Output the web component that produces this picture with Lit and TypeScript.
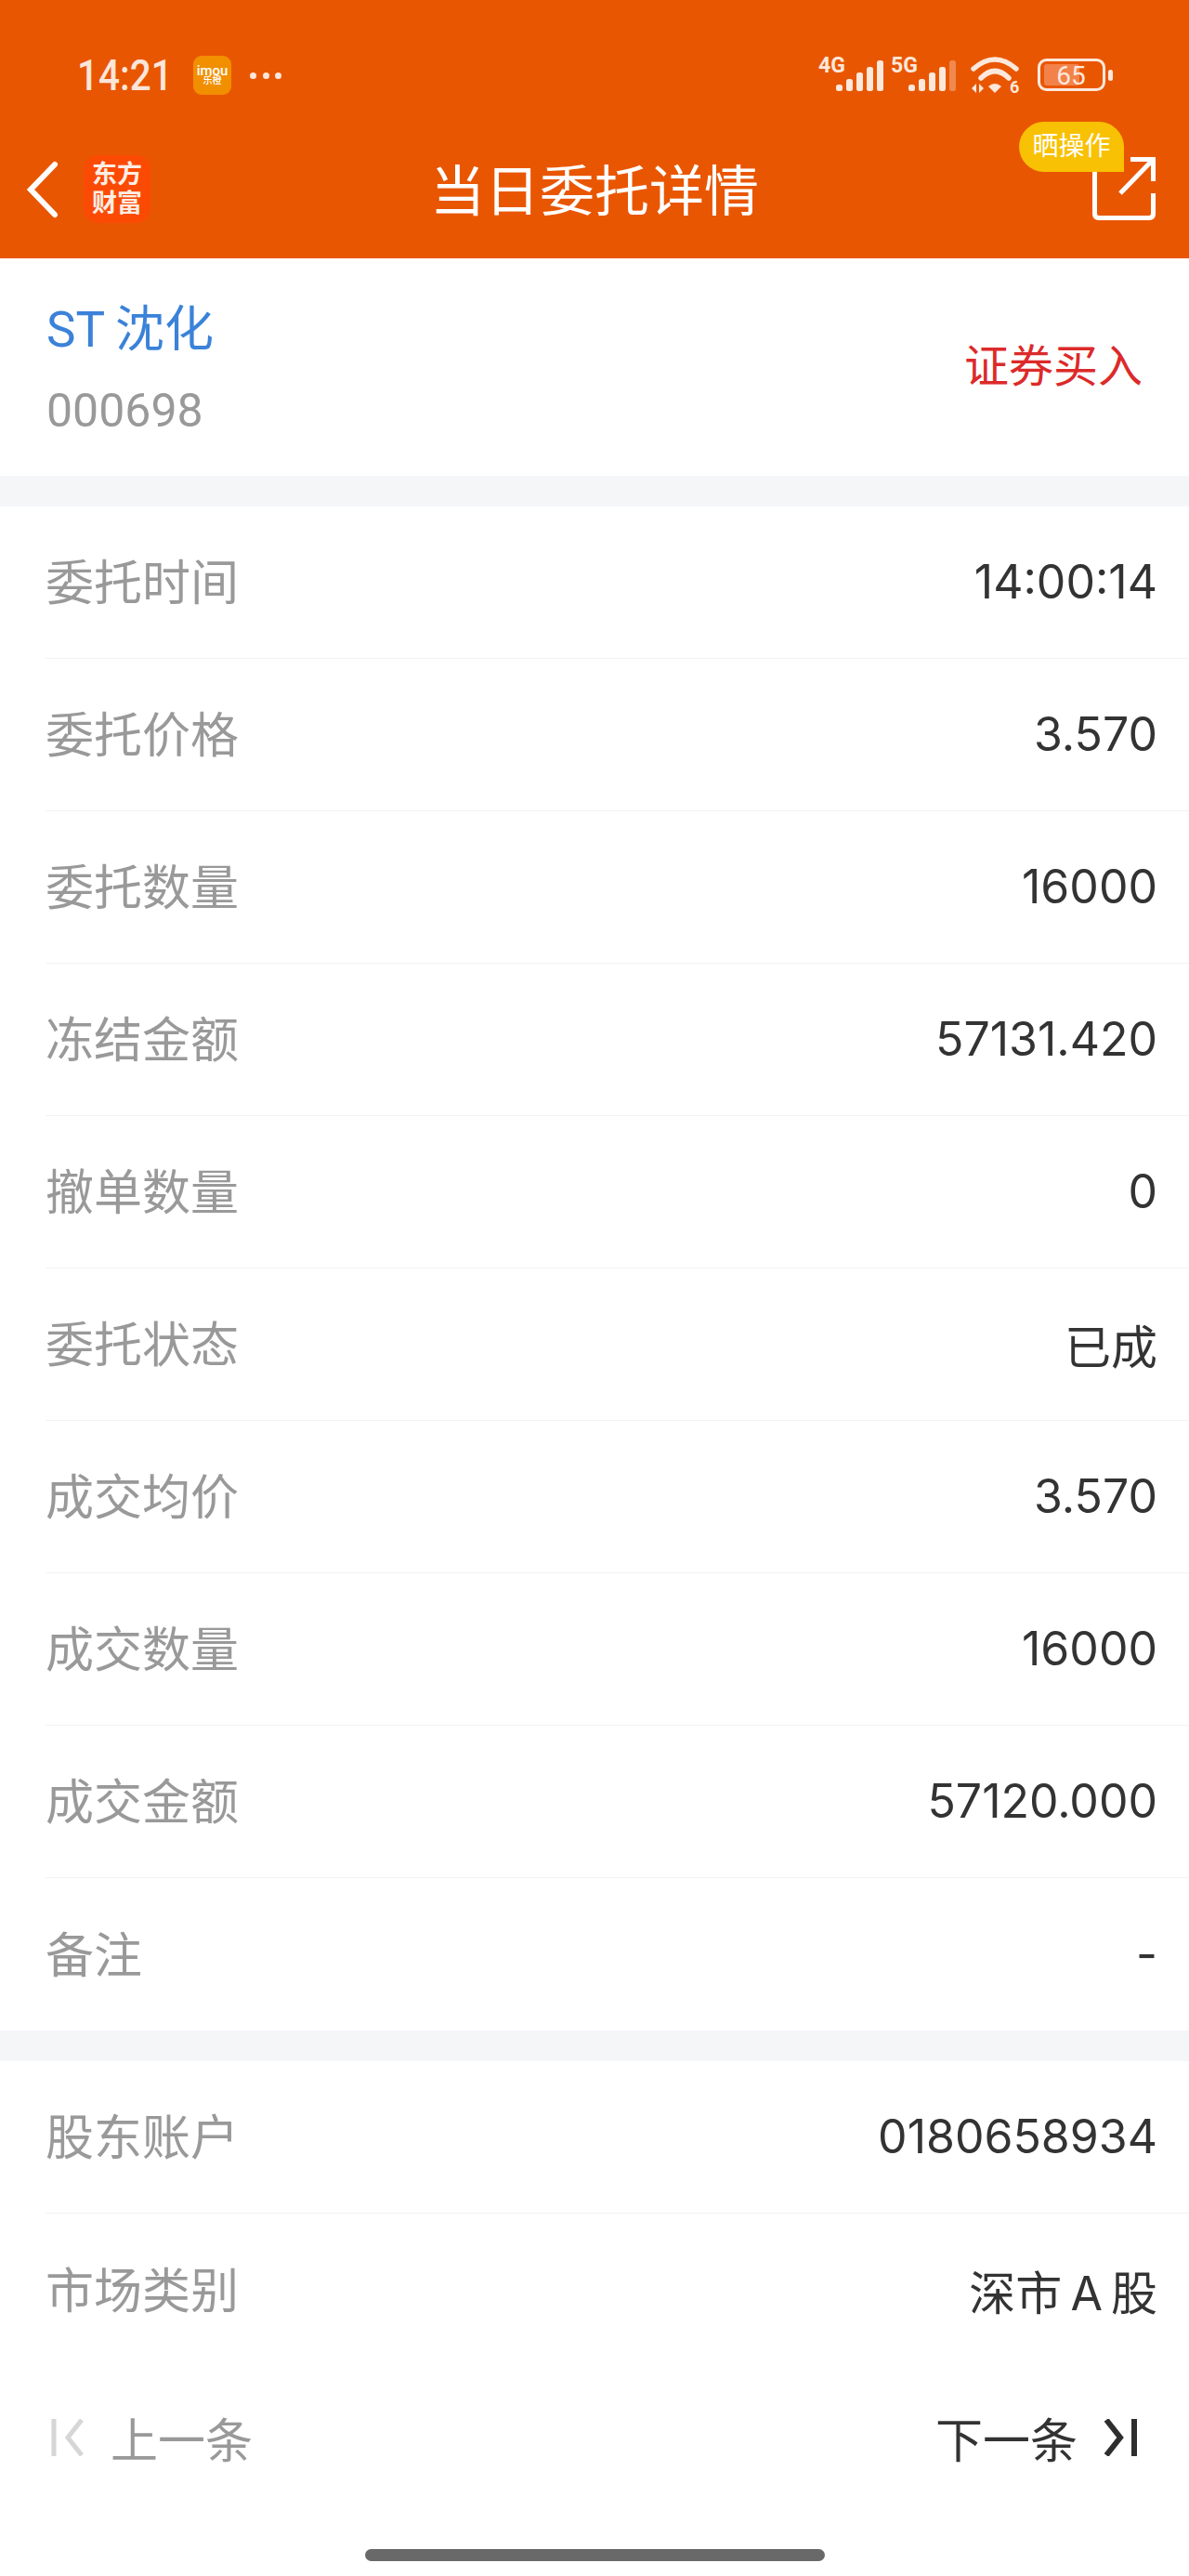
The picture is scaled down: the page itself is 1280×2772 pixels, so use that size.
import { LitElement, html, svg, css } from 'lit';
import { customElement } from 'lit/decorators.js';

const orders = [
  ['委托时间', '14:00:14'],
  ['委托价格', '3.570'],
  ['委托数量', '16000'],
  ['冻结金额', '57131.420'],
  ['撤单数量', '0'],
  ['委托状态', '已成'],
  ['成交均价', '3.570'],
  ['成交数量', '16000'],
  ['成交金额', '57120.000'],
  ['备注', '-'],
];
const account = [
  ['股东账户', '0180658934'],
  ['市场类别', '深市\u2009A\u2009股'],
];

@customElement('app-root')
export class AppRoot extends LitElement {
  static styles = css`
    :host {
      display: block;
      width: 1280px;
      height: 2772px;
      background: #fff;
      font-family: Roboto, 'Noto Sans CJK SC', sans-serif;
      overflow: hidden;
    }
    .top {
      height: 278px;
      background: #e95602;
      color: #fff;
      display: flex;
      flex-direction: column;
    }
    .status {
      height: 160px;
      display: flex;
      align-items: flex-start;
      justify-content: space-between;
      padding: 60px 80px 0 83px;
      box-sizing: border-box;
    }
    .status-left {
      display: flex;
      align-items: center;
      gap: 20px;
      height: 42px;
      color: #fbe6da;
    }
    .status-icons {
      margin-top: -10px;
    }
    .time {
      width: 104px;
      margin-right: 1px;
      font-size: 46px;
      font-weight: 500;
      line-height: 42px;
      white-space: nowrap;
      transform: scaleX(0.88);
      transform-origin: left center;
    }
    .imou {
      width: 41px;
      height: 42px;
      border-radius: 9px;
      background: #f18f01;
      color: #fff;
      display: flex;
      flex-direction: column;
      align-items: center;
      justify-content: center;
      font-size: 15px;
      line-height: 12px;
      font-weight: 500;
    }
    .imou small {
      font-size: 10px;
      line-height: 10px;
    }
    .dots {
      display: flex;
      gap: 6.5px;
    }
    .dots i {
      width: 7px;
      height: 7px;
      border-radius: 50%;
      background: #fbe6da;
    }
    .nav {
      position: relative;
      flex: 1;
      display: flex;
      align-items: center;
      justify-content: center;
      font-size: 59px;
      padding-bottom: 34px;
    }
    .nav-left {
      position: absolute;
      left: 26px;
      top: 8px;
      display: flex;
      align-items: center;
      gap: 24px;
    }
    .logo {
      width: 72px;
      height: 73px;
      border-radius: 16px;
      background: #fb4a04;
      color: #fdeee5;
      font-size: 27px;
      font-weight: 700;
      line-height: 31px;
      display: flex;
      flex-direction: column;
      align-items: center;
      justify-content: center;
    }
    .share {
      position: absolute;
      right: 34px;
      top: 8px;
    }
    .badge {
      position: absolute;
      right: 70px;
      top: -28px;
      width: 113px;
      height: 54px;
      background: #f8c103;
      border-radius: 27px 27px 0 27px;
      color: #fff;
      font-size: 28px;
      line-height: 54px;
      text-align: center;
      white-space: nowrap;
    }
    .summary {
      height: 234px;
      display: flex;
      justify-content: space-between;
      align-items: center;
      padding: 0 50px;
      box-sizing: border-box;
    }
    .name {
      color: #3b82d8;
      font-size: 53px;
      line-height: 76px;
      margin-top: 2px;
    }
    .code {
      color: #999;
      font-size: 50px;
      line-height: 66px;
      margin-top: 16px;
    }
    .kind {
      color: #dc2a2a;
      font-size: 48px;
      margin-top: -10px;
    }
    .gap {
      height: 33px;
      background: #f5f6f8;
    }
    .row {
      height: 164px;
      margin-left: 49px;
      padding: 0 34px 6px 0;
      display: flex;
      justify-content: space-between;
      align-items: center;
      box-sizing: border-box;
      border-bottom: 1px solid #f2f2f2;
    }
    .row:last-child {
      border-bottom: 0;
    }
    .label {
      color: #999;
      font-size: 52px;
    }
    .value {
      color: #333;
      font-family: Inter, 'Noto Sans CJK SC', sans-serif;
      font-size: 50px;
      padding-top: 5px;
    }
    .pager {
      height: 110px;
      margin-top: 22px;
      display: flex;
      justify-content: space-between;
      align-items: center;
      padding: 0 56px 0 55px;
      font-size: 51px;
    }
    .pager div {
      display: flex;
      align-items: center;
      gap: 28px;
    }
    .prev {
      color: #999;
    }
    .next {
      color: #333;
    }
    .home {
      width: 495px;
      height: 13px;
      border-radius: 7px;
      background: #696969;
      margin: 65px auto 0;
    }
  `;

  private signalBars(x: number, lastDim: boolean) {
    return [7, 13, 20, 26, 33].map(
      (h, i) =>
        svg`<rect x="${x + i * 11}" y="${38 - h}" width="7" height="${h}" rx="2.5"
          opacity="${lastDim && i === 4 ? 0.35 : 1}"></rect>`
    );
  }

  private renderRow(r: string[]) {
    return html`<div class="row">
      <span class="label">${r[0]}</span><span class="value">${r[1]}</span>
    </div>`;
  }

  render() {
    return html`
      <div class="top">
        <div class="status">
          <div class="status-left">
            <span class="time">14:21</span>
            <span class="imou">imou<small>乐橙</small></span>
            <span class="dots"><i></i><i></i><i></i></span>
          </div>
          <svg class="status-icons" width="320" height="54" viewBox="0 -10 320 54" fill="#fde8db"
            font-family="Roboto, sans-serif">
            <text x="1" y="18" font-size="23" font-weight="700">4G</text>
            <text x="79" y="18" font-size="23" font-weight="700">5G</text>
            ${this.signalBars(20, false)} ${this.signalBars(98, true)}
            <!-- wifi -->
            <path d="M168 14 Q191 -6 214 14" fill="none" stroke="#fde8db" stroke-width="5.5" stroke-linecap="round" />
            <path d="M176 24 Q191 9 206 24" fill="none" stroke="#fde8db" stroke-width="5.5" stroke-linecap="round" />
            <path d="M184 33 Q191 27 198 33 L191 40 Z" />
            <path d="M171 30 V40 L166 35 Z M174 30 V40 L179 35 Z" />
            <text x="207" y="40" font-size="18" font-weight="700">6</text>
            <!-- battery -->
            <rect x="238.5" y="4.5" width="70" height="32" rx="8" fill="none" stroke="#fde8db" stroke-width="3" />
            <rect x="244" y="9" width="38" height="23" rx="3" fill="#f3824a" />
            <text x="273" y="31" font-size="28" text-anchor="middle">65</text>
            <rect x="313" y="15" width="5" height="12" rx="2.5" />
          </svg>
        </div>
        <div class="nav">
          <div class="nav-left">
            <svg width="40" height="62" viewBox="0 0 40 62" fill="none">
              <path d="M33 4 L7 31 L33 58" stroke="#fff" stroke-width="6" stroke-linecap="round" />
            </svg>
            <div class="logo"><span>东方</span><span>财富</span></div>
          </div>
          当日委托详情
          <svg class="share" width="72" height="72" viewBox="0 0 72 72" fill="none" stroke="#fff" stroke-width="5">
            <path d="M4.5 15 V63 Q4.5 67.5 9 67.5 H63 Q67.5 67.5 67.5 63 V41" />
            <path d="M32 41 L67 5 M43 4.5 H67.5 V28" />
          </svg>
          <span class="badge">晒操作</span>
        </div>
      </div>
      <div class="summary">
        <div>
          <div class="name">ST\u2009沈化</div>
          <div class="code">000698</div>
        </div>
        <div class="kind">证券买入</div>
      </div>
      <div class="gap"></div>
      <div>${orders.map(r => this.renderRow(r))}</div>
      <div class="gap"></div>
      <div>${account.map(r => this.renderRow(r))}</div>
      <div class="pager">
        <div class="prev">
          <svg width="36" height="40" viewBox="0 0 36 40" fill="none" stroke="#d6d6d6" stroke-width="5">
            <path d="M3 0 V40 M33 1 L18 20 L33 39" />
          </svg>
          上一条
        </div>
        <div class="next">
          下一条
          <svg width="36" height="40" viewBox="0 0 36 40" fill="none" stroke="#2e2e2e" stroke-width="6">
            <path d="M3 1 L18 20 L3 39 M33 0 V40" />
          </svg>
        </div>
      </div>
      <div class="home"></div>
    `;
  }
}
